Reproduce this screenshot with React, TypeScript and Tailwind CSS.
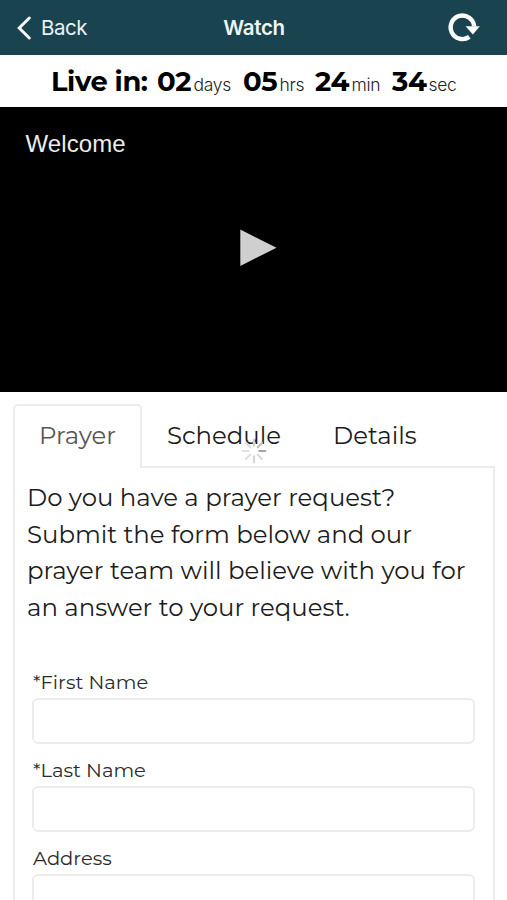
function Back() {
  return (
    <div className="flex items-center pt-[1px]">
      <svg width="16" height="24" viewBox="0 0 16 24" fill="none" stroke="#f4f8f9" strokeWidth="3" strokeLinecap="round" strokeLinejoin="miter" aria-hidden="true">
        <path d="M13.3 2 3.2 12l10.1 10" />
      </svg>
      <span className="ml-[9px] text-[20.5px] leading-7 tracking-[-0.5px] text-[#eaf2f5]">Back</span>
    </div>
  );
}

function ReloadIcon() {
  return (
    <svg width="34" height="30" viewBox="0 0 34 30" fill="none" aria-hidden="true">
      <path d="M22.3 23.9A11.8 11.8 0 1 1 27.2 13.4" stroke="#fff" strokeWidth="4.4" />
      <path d="M18.6 13.3h14.2l-6.9 8.1z" fill="#fff" />
    </svg>
  );
}

function Spinner() {
  const shades = ['#a6a6a6', '#d9d9d9', '#d6d6d6', '#dedede', '#e3e3e3', '#dcdcdc', '#cfcfcf', '#bfbfbf'];
  return (
    <svg className="absolute left-[241px] top-[438px]" width="26" height="26" viewBox="-13 -13 26 26" aria-hidden="true">
      {shades.map((c, i) => (
        <line key={i} x1="5.3" y1="0" x2="11.3" y2="0" stroke={c} strokeWidth="2.2" strokeLinecap="round" transform={`rotate(${i * 45})`} />
      ))}
    </svg>
  );
}

function Unit({ value, unit, className }: { value: string; unit: string; className: string }) {
  return (
    <span className={`flex items-baseline ${className}`}>
      <b className="w-[36.5px] text-[27.5px] font-bold tracking-[-0.4px]">{value}</b>
      <span className="font-[Inter,sans-serif] text-[17.5px] font-light tracking-[-0.3px] text-[#222]">{unit}</span>
    </span>
  );
}

function Field({ label }: { label: string }) {
  return (
    <label className="mb-[12px] block">
      <span className="block h-[30px] pl-[1px] text-[19.5px] leading-[28px] text-[#2b2b2b]">{label}</span>
      <input className="block h-[46px] w-full rounded-[6px] border-2 border-[#ececec] bg-white px-3 outline-none" />
    </label>
  );
}

export default function App() {
  return (
    <div className="relative h-[900px] w-[507px] overflow-hidden bg-white font-[Montserrat,Inter,sans-serif] text-black">
      <header className="grid h-[55px] grid-cols-3 items-center bg-[#1a4350] pl-[16px] pr-[26px] font-[Inter,sans-serif]">
        <Back />
        <h1 className="ml-[11px] justify-self-center pt-[1px] text-[20.5px] font-semibold tracking-[-0.3px] text-[#eef5f7]">Watch</h1>
        <div className="justify-self-end"><ReloadIcon /></div>
      </header>

      <div className="flex h-[52px] items-baseline pl-[51px] leading-[52px]">
        <b className="w-[106px] text-[27.3px] font-bold tracking-[-0.4px]">Live in:</b>
        <Unit value="02" unit="days" className="w-[86px]" />
        <Unit value="05" unit="hrs" className="w-[72px]" />
        <Unit value="24" unit="min" className="w-[77px]" />
        <Unit value="34" unit="sec" className="" />
      </div>

      <section className="flex h-[285px] flex-col bg-black">
        <div className="pl-[25.5px] pt-[20px] font-['Liberation_Sans',Arial,sans-serif] text-[24px] leading-[34px] tracking-[0.1px] text-[#ececec]">Welcome</div>
        <svg className="ml-[240px] mt-[68px]" width="37" height="38" viewBox="0 0 37 38" aria-label="Play">
          <path d="M0.3 0.6 36.5 18.7 0.3 37z" fill="#cfcfcf" />
        </svg>
      </section>

      <nav className="flex h-[76px] items-end pl-[13px] pr-[12px] text-[24.4px] leading-[58px] text-[#1c1c1c]">
        <div className="z-10 h-[64px] w-[129px] rounded-t-[5px] border-2 border-b-0 border-[#ececec] bg-white pl-[24px] text-[#555]">
          Prayer
        </div>
        <div className="h-[64px] flex-1 border-b-2 border-[#ececec] pt-[2px]">
          <div className="flex">
            <span className="w-[191px] pl-[25px]">Schedule</span>
            <span>Details</span>
          </div>
        </div>
      </nav>

      <main className="ml-[13px] mr-[12px] h-[500px] border-x-2 border-[#ececec] px-[12px] pt-[11px]">
        <p className="h-[189px] text-[24.4px] leading-[36.7px] text-[#1c1c1c]">
          Do you have a prayer request?<br />
          Submit the form below and our<br />
          prayer team will believe with you for<br />
          an answer to your request.
        </p>
        <form className="pl-[5px] pr-[6px]">
          <Field label="*First Name" />
          <Field label="*Last Name" />
          <Field label="Address" />
        </form>
      </main>
      <Spinner />
    </div>
  );
}
